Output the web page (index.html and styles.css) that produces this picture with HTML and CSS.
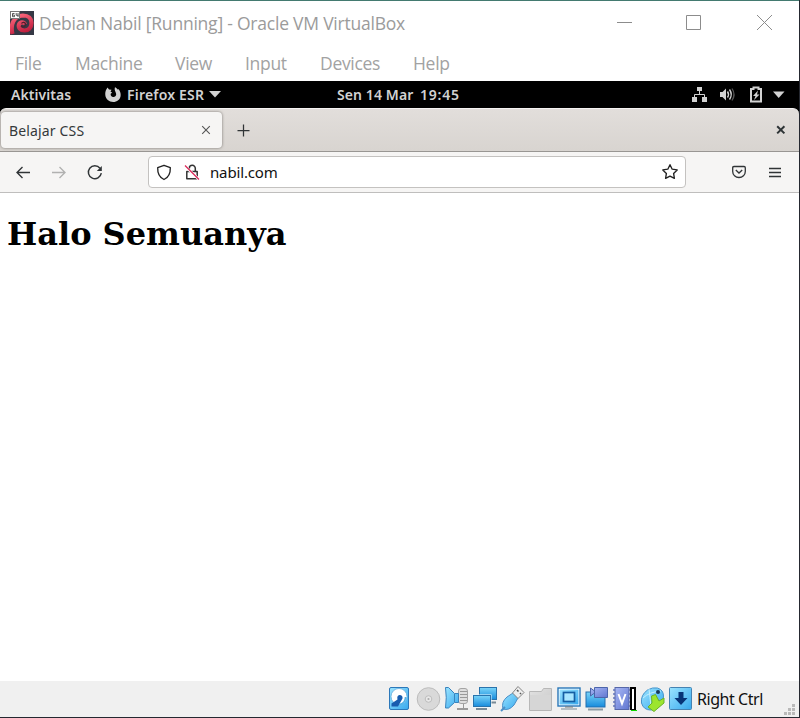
FILE: index.html
```html
<!DOCTYPE html>
<html lang="id">
<head>
<meta charset="utf-8">
<title>Debian Nabil [Running] - Oracle VM VirtualBox</title>
<link rel="stylesheet" href="styles.css">
</head>
<body>
<div class="window">
  <header class="titlebar">
    <svg class="logo" width="24" height="24" viewBox="0 0 24 24">
      <defs><linearGradient id="swirl" x1="0" x2=".4" y2="1"><stop stop-color="#ff6b80"/><stop offset="1" stop-color="#c01f3f"/></linearGradient></defs>
      <rect width="24" height="24" fill="#353845"/>
      <path d="M2.500 23C0 13 4 5 13 4.500c5.500 0 8.500 3 8.500 7.500 0 4.500-3 7.500-7 7.500-4.500 0-6.500-3-5.500-6 1-2.800 5-3 6 0" fill="none" stroke="url(#swirl)" stroke-width="4.200"/>
      <path d="M11.500 12.500c1-2 4.500-1.500 4 1.500-.5 2-3 2.500-4.500 1" fill="none" stroke="#50202f" stroke-width="1.200"/>
      <rect x=".5" y=".5" width="9" height="7" fill="#fff" stroke="#777"/>
      <path d="M4.500 2.500H2.500v3.200h2v-1.600h-2M6.200 2v2.300h2.300M8 2v4" fill="none" stroke="#333" stroke-width=".8"/>
    </svg>
    <span class="caption">Debian Nabil [Running] - Oracle VM VirtualBox</span>
    <svg class="controls" width="160" height="18" viewBox="0 0 160 18" fill="none" stroke="#8c8c8c">
      <path d="M2 8.500h15M71.500 1.500h14v14h-14zM142 1l15 15M157 1l-15 15"/>
    </svg>
  </header>
  <nav class="menu">
    <span class="m-file">File</span><span class="m-machine">Machine</span><span class="m-view">View</span><span class="m-input">Input</span><span class="m-devices">Devices</span><span>Help</span>
  </nav>

  <div class="panel">
    <span class="activities">Aktivitas</span>
    <svg class="fox" width="16" height="17" viewBox="0 0 16 17">
      <path d="M1 4l1.500-2.500L4 3.500l2.500.2-1 2 1.700.7-1.500 1.400c-.5 2.200 1.300 3.500 3 3.200 2.200-.3 3-2.300 2.200-4C10.500 5.500 9 4 10 1c1 1 2.200 1.500 3 2.700L13.500 3C15 5 16 7 15.600 10c-.5 3.500-3.600 6-7.400 6C4 16 .6 13 .3 9 .2 7 .4 5.500 1 4z" fill="#d2d2d2"/>
    </svg>
    <span class="app">Firefox ESR</span>
    <svg class="arrow" width="12" height="7" viewBox="0 0 12 7"><path d="M0 0h12L6 6.500z" fill="#d2d2d2"/></svg>
    <span class="date">Sen 14 Mar</span><span class="time">19:45</span>
    <svg class="tray" width="96" height="18" viewBox="0 0 96 18">
      <g fill="#d2d2d2">
        <path d="M6 1h5v4H6zM1 11h5v5H1zM11 11h5v5h-5z"/>
        <path d="M3.500 11V8.500h10V11M8.500 5v3.500" fill="none" stroke="#d2d2d2"/>
        <path d="M29 6h2.500L35 2.500v12L31.500 11H29z"/>
        <path d="M36.500 5.500q2 3 0 6M38.500 3.500q3.500 5 0 10" fill="none" stroke="#d2d2d2" stroke-width="1.400"/>
        <path d="M41 2.500q4 6 0 12" fill="none" stroke="#555" stroke-width="1.300"/>
        <path d="M60 3h2.500V1.500h5V3H70v12.500H60z" fill="none" stroke="#d2d2d2" stroke-width="2"/>
        <path d="M67 4.500L62 10h2.500l-1.500 4 5.500-5.500H66z"/>
        <path d="M82 5.500h11.500L87.700 12z"/>
      </g>
    </svg>
  </div>

  <div class="browser">
    <div class="tabs">
      <div class="tab">
        <span class="tab-title">Belajar CSS</span>
        <svg width="10" height="10" viewBox="0 0 10 10"><path d="M1.200 1.200l7.600 7.600M8.800 1.200L1.200 8.800" stroke="#555" stroke-width="1.100"/></svg>
      </div>
      <svg class="plus" width="13" height="13" viewBox="0 0 13 13"><path d="M6.500 .5v12M.5 6.500h12" stroke="#303436" stroke-width="1.250"/></svg>
      <svg class="close" width="10" height="10" viewBox="0 0 10 10"><path d="M1.200 1.200l7.200 7.200M8.400 1.200L1.200 8.400" stroke="#2e3436" stroke-width="2"/></svg>
    </div>
    <div class="toolbar">
      <svg class="nav" width="92" height="18" viewBox="0 0 92 18" fill="none" stroke-width="1.350">
        <path d="M15 9.500H2M7.500 4L2 9.500l5.500 5.500" stroke="#303436"/>
        <path d="M37 9.500h13M44.500 4l5.500 5.500-5.500 5.500" stroke="#b1b1b0"/>
        <path d="M85 5.200a6.500 6.500 0 1 0 1.300 5" stroke="#303436" stroke-width="1.450"/>
        <path d="M86.800 3v5h-5z" fill="#303436"/>
      </svg>
      <div class="address">
        <svg class="shield" width="16" height="17" viewBox="0 0 16 17"><path d="M8 1.300l6.300 2.400c.2 5-1.300 9.400-6.300 11.800C3 13.100 1.500 8.700 1.700 3.700z" fill="none" stroke="#222" stroke-width="1.350" stroke-linejoin="round"/></svg>
        <svg class="lock" width="16" height="17" viewBox="0 0 16 17"><path d="M2.800 7.500h10.400v7.300H2.800zM5.300 7V4.300a3 3 0 0 1 6 0V7" fill="none" stroke="#333" stroke-width="1.500" stroke-linejoin="round"/><path d="M1 2l14 13.500" stroke="#fff" stroke-width="2.500"/><path d="M1 1.500l14 14" stroke="#db2858" stroke-width="1.300"/></svg>
        <span class="url">nabil.com</span>
        <svg class="star" width="18" height="18" viewBox="0 0 18 18"><path d="M9 1.700l2.200 4.500 5 .7-3.600 3.500.8 5L9 13.100l-4.400 2.300.8-5L1.800 6.900l5-.7z" fill="none" stroke="#222" stroke-width="1.350" stroke-linejoin="round"/></svg>
      </div>
      <svg class="pocket" width="16" height="14" viewBox="0 0 16 14"><path d="M3 1.500h10q1.300 0 1.300 1.300V6.500C14.300 10 11.500 12.500 8 12.500S1.700 10 1.700 6.500V2.800Q1.700 1.500 3 1.500zM4.800 5l3.200 3 3.200-3" fill="none" stroke="#303436" stroke-width="1.300"/></svg>
      <svg class="burger" width="12" height="11" viewBox="0 0 12 11"><path d="M0 1.500h12M0 5.500h12M0 9.500h12" stroke="#303436" stroke-width="1.300"/></svg>
    </div>
  </div>

  <main class="page"><h1>Halo Semuanya</h1></main>

  <footer class="status">
    <svg class="devices" width="308" height="28" viewBox="386 685 308 28">
      <defs>
        <linearGradient id="sky" x2="1" y2="1"><stop stop-color="#9be4ff"/><stop offset="1" stop-color="#38a9ee"/></linearGradient>
        <linearGradient id="deep" x2="0" y2="1"><stop stop-color="#7bd5f9"/><stop offset="1" stop-color="#178bdc"/></linearGradient>
        <linearGradient id="violet" x2="1" y2="1"><stop stop-color="#a9b8f5"/><stop offset="1" stop-color="#6076d0"/></linearGradient>
        <linearGradient id="gray" x2="1" y2="1"><stop stop-color="#e2e2e2"/><stop offset="1" stop-color="#c8c8c8"/></linearGradient>
      </defs>
      <!-- hard disk -->
      <rect x="389.500" y="687.500" width="19" height="22" rx="1.500" fill="url(#sky)" stroke="#2b78ba"/>
      <circle cx="399" cy="696.500" r="8" fill="#fff" stroke="#5ba5d9" stroke-width=".7"/>
      <path d="M391.500 706.500v-3l6-4q-1-4 2-4.500 3.500 0 3 3.500l-4.500 8z" fill="#185caf"/>
      <path d="M400 704.500q5.500-2 5.500-7.500" fill="none" stroke="#51b2e8" stroke-width="1.500"/>
      <!-- optical disc -->
      <circle cx="428.500" cy="699" r="11.300" fill="#d9d9d9" stroke="#bcbcbc"/>
      <circle cx="428.500" cy="699" r="3.300" fill="#e8e8e8" stroke="#bdbdbd"/><circle cx="428.500" cy="699" r="1.100" fill="#aaa"/>
      <!-- audio -->
      <rect x="458.500" y="688.500" width="9" height="15" rx="2.500" fill="#dedede" stroke="#a4a4a4"/>
      <path d="M460 691.500h7M460 694.500h7M460 697.500h7M460 700.500h7M463.500 704v5" stroke="#999"/><path d="M457 709h11" stroke="#999" stroke-width="2"/>
      <path d="M445.500 687.500q1.500 10 0 20.500h3l6-5.500h4v-9h-4l-6-6z" fill="url(#sky)" stroke="#3983bd"/>
      <path d="M454.500 694v8" stroke="#3983bd"/>
      <!-- network -->
      <rect x="479.500" y="687.500" width="17" height="12" fill="url(#deep)" stroke="#2973ac"/>
      <path d="M486 702.500h10" stroke="#788a97" stroke-width="2"/>
      <rect x="473.500" y="695.500" width="17" height="11" fill="url(#deep)" stroke="#eef9ff" stroke-width="2"/>
      <rect x="473.500" y="695.500" width="17" height="11" fill="url(#deep)" stroke="#2973ac"/>
      <path d="M476 709h11" stroke="#788a97" stroke-width="2"/>
      <!-- usb -->
      <path d="M503 709q-2-7 4-12l6-4 5 5-4 7q-5 6-11 4z" fill="url(#sky)" stroke="#4a8fc7"/>
      <path d="M512.500 693l5.500-6.500 6 6-6 6z" fill="#eee" stroke="#858585"/><path d="M517 690l1.500 1.500M520 693l1 1" stroke="#555" stroke-width="1.500"/><path d="M505 707l-4 4" stroke="#4a8fc7" stroke-width="2"/>
      <!-- shared folders -->
      <path d="M529.500 710v-18.500h12l2-3h8V710z" fill="url(#gray)" stroke="#b8b8b8"/><path d="M530 710v-15h21v15z" fill="#d6d6d6"/><path d="M529.500 710.500h22" stroke="#b5b5b5"/>
      <!-- display -->
      <rect x="558" y="688" width="22" height="18" fill="#fff" stroke="#2877b9" stroke-width="1.400"/>
      <rect x="559.500" y="689.500" width="19" height="15" fill="url(#sky)"/><rect x="563.500" y="692.500" width="11" height="9" fill="#a8e6ff" stroke="#155fa4" stroke-width="1.700"/>
      <path d="M561 709h16" stroke="#b5bdc2" stroke-width="2"/><path d="M565 707h8" stroke="#777"/>
      <!-- recording -->
      <rect x="586" y="692" width="19" height="15" fill="url(#deep)" stroke="#236fae"/><path d="M588 709.500h15" stroke="#8d9aa2" stroke-width="2"/>
      <path d="M594.500 687.500h13v10h-13zM594.500 691l-4-3v8l4-3z" fill="url(#violet)" stroke="#4c65aa"/>
      <!-- cpu -->
      <path d="M613 690h18M613 694h18M613 698h18M613 702h18M613 706h18" stroke="#6578bd" stroke-width="1.600"/>
      <rect x="615" y="687.500" width="14" height="22" fill="url(#violet)" stroke="#5667a8"/>
      <path d="M618.500 694l3.500 9.500 3.500-9.500" fill="none" stroke="#fff" stroke-width="2"/>
      <path d="M630 687h6v23h-6z" fill="#000"/><path d="M632 689h2v20h-2z" fill="#fff"/><path d="M631 710.500h6" stroke="#0ed400"/>
      <!-- mouse integration -->
      <path d="M641.500 703q-1-8 6-13 5-3 10-2 6 2 6 8c0 7-5 14-13 14q-7 0-9-7z" fill="url(#sky)" stroke="#4794ca"/>
      <path d="M643 698q6-6 18-7M649 689q1 8 2 18" fill="none" stroke="#c5efff"/>
      <path d="M651.500 696l4-1.500 3.500 6.500 5-3v5l-10 8.500-6-4.500 4-4z" fill="#9ce52e" stroke="#6bb226"/><circle cx="658" cy="692" r="2" fill="#173a5d"/>
      <!-- keyboard capture -->
      <rect x="669.500" y="687.500" width="22" height="22" rx="1" fill="url(#sky)" stroke="#4583b2"/><path d="M678.500 692h5v6h4l-6.500 7-6.500-7h4z" fill="#073477"/>
    </svg>
    <span class="hostkey">Right Ctrl</span>
    <svg class="grip" width="12" height="12" viewBox="0 0 12 12"><path d="M8 0h3v3H8zM4 4h3v3H4zM8 4h3v3H8zM0 8h3v3H0zM4 8h3v3H4zM8 8h3v3H8z" fill="#b9b9b9"/></svg>
  </footer>
</div>
</body>
</html>
```
FILE: styles.css
```css
* { box-sizing: border-box; }
body { margin: 0; background: #252830; }
svg { display: block; flex: none; }
span { white-space: pre; }
.window {
  width: 799px; height: 717px; display: flex; flex-direction: column;
  background: #fff; border-top: 1px solid #437a70;
}
.titlebar {
  height: 44px; flex: none; display: flex; align-items: center;
  padding-left: 10px; color: #9b9b9b; font: 17.5px "Open Sans", sans-serif;
}
.titlebar .caption { margin-left: 5px; letter-spacing: -.22px; }
.controls { margin-left: auto; margin-right: 24px; }
.menu {
  height: 36px; flex: none; display: flex; align-items: center;
  padding-left: 15px; color: #a2a2a2; font: 17.5px "Open Sans", sans-serif;
  letter-spacing: -.3px;
}
.menu span { flex: none; }
.m-file { width: 60px; }
.m-machine { width: 100px; }
.m-view { width: 70px; }
.m-input { width: 75px; }
.m-devices { width: 93px; }
.panel {
  height: 27px; flex: none; display: flex; align-items: center;
  padding-left: 11px; background: #000; color: #d2d2d2;
  font: 600 14px "Noto Sans", sans-serif;
}
.activities { width: 94px; letter-spacing: .05px; }
.app { margin-left: 6px; width: 79px; letter-spacing: .2px; }
.arrow { margin-left: 3px; }
.date { width: 83px; margin-left: 116px; letter-spacing: .1px; }
.time { letter-spacing: .8px; }
.tray { margin-left: auto; margin-right: 12px; }
.browser { flex: none; background: #000; }
.tabs {
  height: 44px; display: flex; align-items: center;
  background: linear-gradient(#e2dedb, #d8d4d0);
  border-top: 1px solid #f5f3f2; border-bottom: 1px solid #999693;
  border-radius: 6px 6px 0 0;
}
.tab {
  width: 221px; height: 36px; margin-left: 1px; padding: 0 11px 0 8px;
  display: flex; align-items: center; justify-content: space-between;
  background: #f6f5f4; border-radius: 4px; box-shadow: 0 0 3px #77736f;
  color: #35393b; font: 14px "Noto Sans", sans-serif;
}
.tab-title { letter-spacing: .15px; }
.plus { margin-left: 15px; }
.close { margin-left: auto; margin-right: 13px; }
.toolbar {
  height: 41px; display: flex; align-items: center; background: #f6f5f4;
  border-bottom: 1px solid #bfbebd;
}
.nav { margin-left: 15px; }
.address {
  width: 538px; height: 32px; margin-left: 41px; padding: 0 6px 0 7px;
  display: flex; align-items: center; background: #fff;
  border: 1px solid #c4c2c0; border-radius: 4px;
}
.lock { margin-left: 12px; }
.url { margin-left: 10px; color: #111; font: 15px "Noto Sans", sans-serif; letter-spacing: -.15px; }
.star { margin-left: auto; }
.pocket { margin-left: 45px; }
.burger { margin-left: 22px; }
.page { flex: 1; padding-left: 7px; }
.page h1 { margin: 22px 0 0; font: bold 32px/38px "DejaVu Serif", serif; color: #000; }
.status {
  height: 36px; flex: none; display: flex; align-items: center;
  padding-left: 386px; background: #f0f0f0;
}
.hostkey { margin-left: 3px; color: #111; font: 16px "Noto Sans", sans-serif; letter-spacing: -.45px; }
.grip { margin-left: auto; margin-right: 3px; align-self: flex-end; margin-bottom: 1px; }
```
